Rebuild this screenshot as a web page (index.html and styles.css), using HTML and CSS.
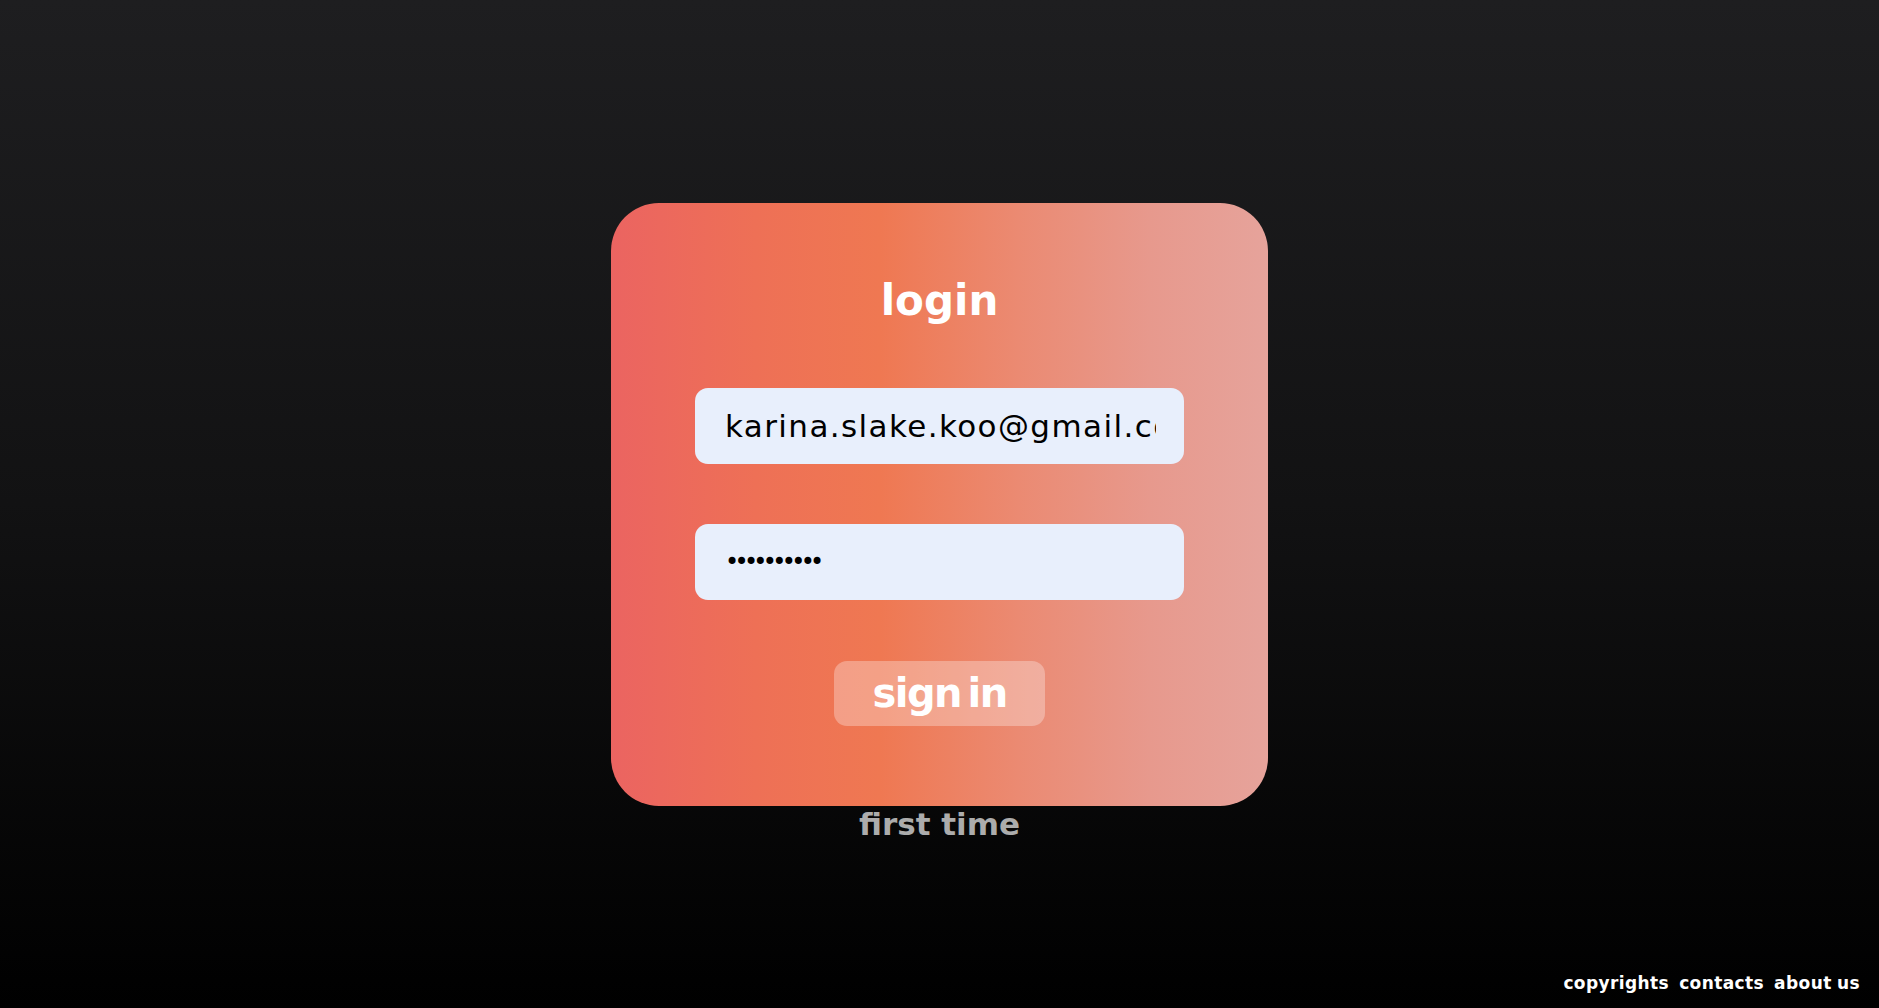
FILE: index.html
```html
<!DOCTYPE html>
<html lang="en">
<head>
<meta charset="utf-8">
<title>login</title>
<link rel="stylesheet" href="styles.css">
</head>
<body>
<div class="page">
  <div class="spacer"></div>
  <form class="card">
    <h1 class="title">login</h1>
    <input class="field field-email" type="email" value="karina.slake.koo@gmail.com">
    <input class="field field-password" type="password" value="password12">
    <button class="btn" type="button">sign in</button>
  </form>
  <div class="below">
    <a class="first-time" href="#">first time</a>
    <footer class="footer">
      <a href="#">copyrights</a>
      <a href="#">contacts</a>
      <a href="#">about us</a>
    </footer>
  </div>
</div>
</body>
</html>
```

FILE: styles.css
```css
* { box-sizing: border-box; }
html, body { margin: 0; padding: 0; }
body {
  font-family: "DejaVu Sans", sans-serif;
  background: linear-gradient(180deg, #1e1e20 0%, #121213 50%, #000 100%);
  color: #fff;
  height: 100vh;
  overflow: hidden;
}
.page {
  height: 100vh;
  display: grid;
  grid-template-rows: 1fr auto 1fr;
  justify-items: center;
}
.card {
  width: 657px;
  height: 603px;
  border-radius: 48px;
  background: linear-gradient(90deg, #eb6461 0%, #ee7056 22%, #ef7852 41%, #eb8a72 62%, #e7998d 82%, #e6a39b 100%);
  padding: 73px 84px 80px;
  display: flex;
  flex-direction: column;
  align-items: center;
}
.title {
  margin: 0;
  font-size: 42px;
  font-weight: 700;
  line-height: normal;
  color: #fff;
}
.field {
  width: 489px;
  height: 76px;
  border: none;
  border-radius: 13px;
  background: #e8effc;
  padding: 0 28px 0 30px;
  color: #000;
  outline: none;
  font-family: "DejaVu Sans", sans-serif;
}
.field-email {
  margin-top: 63px;
  font-size: 31px;
  letter-spacing: 1.4px;
}
.field-password {
  margin-top: 60px;
  font-size: 24px;
  letter-spacing: -4.7px;
}
.btn {
  margin-top: 61px;
  width: 211px;
  height: 65px;
  border: none;
  border-radius: 13px;
  background: rgba(255, 255, 255, 0.3);
  color: #fff;
  font-family: "DejaVu Sans", sans-serif;
  font-weight: 700;
  font-size: 40px;
  letter-spacing: -1.5px;
  word-spacing: -6px;
  padding: 0;
  line-height: normal;
  cursor: pointer;
}
.below {
  width: 100%;
  display: flex;
  flex-direction: column;
  justify-content: space-between;
  align-items: center;
}
.first-time {
  color: #acacac;
  text-decoration: none;
  font-weight: 700;
  font-size: 31px;
  line-height: normal;
}
.footer {
  align-self: flex-end;
  display: flex;
  gap: 10px;
  padding: 0 19px 15px 0;
}
.footer a {
  color: #fff;
  text-decoration: none;
  font-weight: 700;
  font-size: 17px;
  letter-spacing: 0.4px;
  word-spacing: -1px;
  line-height: normal;
}
```
